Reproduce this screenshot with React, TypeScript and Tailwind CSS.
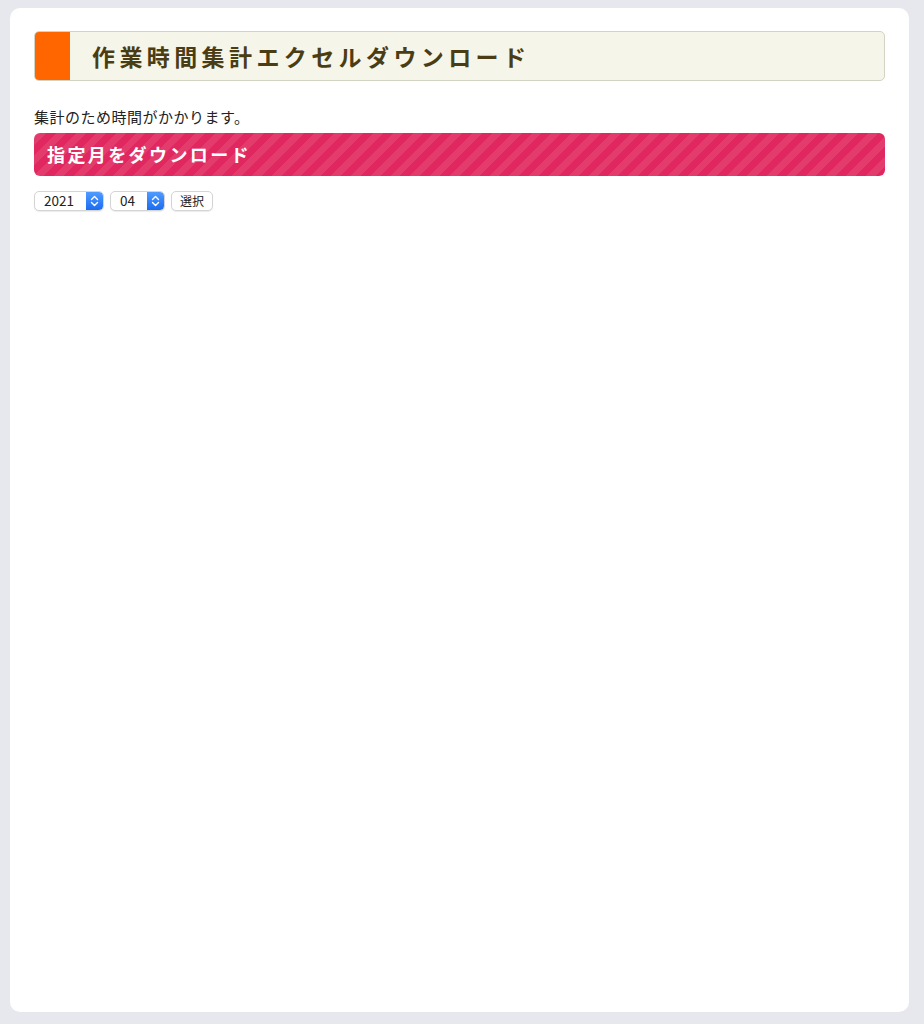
import React from "react";

function Stepper() {
  return (
    <div className="w-[17px] h-full rounded-r-[4px] bg-[linear-gradient(#4f9bff,#1b6cf2)] flex items-center justify-center">
      <svg width="9" height="12" viewBox="0 0 9 12" fill="none" stroke="white" strokeWidth="1.4" strokeLinecap="round" strokeLinejoin="round">
        <path d="M1.5 4.5 L4.5 1.5 L7.5 4.5" />
        <path d="M1.5 7.5 L4.5 10.5 L7.5 7.5" />
      </svg>
    </div>
  );
}

function FakeSelect({ value, width }: { value: string; width: string }) {
  return (
    <div className={`${width} h-[20px] flex items-stretch rounded-[5px] border border-[#d4d4d4] bg-white shadow-[0_1px_1px_rgba(0,0,0,0.08)] overflow-hidden`}>
      <div className="flex-1 flex items-center pl-[9px] text-[13.5px] text-[#222] leading-none">{value}</div>
      <Stepper />
    </div>
  );
}

export default function App() {
  return (
    <div className="min-h-[1024px] bg-[#e7e7ee] pl-[10px] pr-[15px] pt-[8px] pb-[12px] font-['Noto_Sans_CJK_JP','Noto_Sans',sans-serif]">
      <div className="h-[1004px] bg-white rounded-[10px] px-[24px] pt-[23px]">
        <div className="h-[50px] flex rounded-[5px] border border-[#d3d3c4] bg-[#f5f5e9] overflow-hidden">
          <div className="w-[36px] bg-[#ff6600] -my-px -ml-px"></div>
          <div className="flex items-center pl-[22px] text-[23px] font-bold tracking-[4.4px] text-[#4a3d14]">
            作業時間集計エクセルダウンロード
          </div>
        </div>
        <div className="mt-[26px] text-[15px] leading-[20px] tracking-[0.5px] text-[#222]">集計のため時間がかかります。</div>
        <div className="mt-[6px] h-[43px] rounded-[6px] flex items-center pl-[13px] text-[18px] font-bold tracking-[2.4px] text-white bg-[repeating-linear-gradient(-45deg,#e0275f_0px,#e0275f_7px,#e43b6d_7px,#e43b6d_14px)]">
          指定月をダウンロード
        </div>
        <div className="mt-[15px] flex items-center">
          <FakeSelect value="2021" width="w-[70px]" />
          <div className="w-[6px]" />
          <FakeSelect value="04" width="w-[55px]" />
          <div className="w-[6px]" />
          <div className="h-[20px] w-[42px] flex items-center justify-center rounded-[5px] border border-[#d4d4d4] bg-white shadow-[0_1px_1px_rgba(0,0,0,0.08)] text-[12px] text-[#222] leading-none">
            選択
          </div>
        </div>
      </div>
    </div>
  );
}
